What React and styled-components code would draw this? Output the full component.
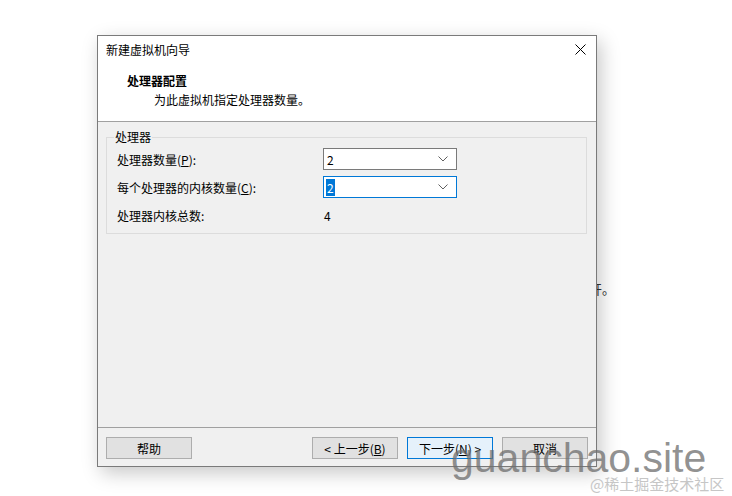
import styled, { createGlobalStyle } from "styled-components";

const GlobalStyle = createGlobalStyle`
  html, body {
    margin: 0;
    background: #ffffff;
  }
  body {
    font-family: "Noto Sans CJK SC", "Microsoft YaHei", sans-serif;
    font-size: 12px;
    color: #000;
  }
`;

const Page = styled.div`
  position: relative;
  width: 732px;
  height: 496px;
  padding: 35px 0 0 97px;
  box-sizing: border-box;
  overflow: hidden;
`;

const BehindText = styled.span`
  position: absolute;
  left: 589px;
  top: 279px;
  font-size: 13px;
  color: #333;
`;

const Window = styled.div`
  position: relative;
  z-index: 1;
  width: 500px;
  height: 432px;
  box-sizing: border-box;
  border: 1px solid #7a7a7a;
  background: #f0f0f0;
  display: flex;
  flex-direction: column;
  box-shadow: 4px 6px 18px rgba(0, 0, 0, 0.22);
`;

const TitleBar = styled.div`
  height: 27px;
  display: flex;
  align-items: center;
  justify-content: space-between;
  padding: 0 6px 0 8px;
  background: #fff;
`;

const Close = styled.div`
  width: 20px;
  height: 20px;
  display: flex;
  align-items: center;
  justify-content: center;
`;

const Header = styled.div`
  background: #fff;
  padding: 9px 0 13px 29px;
  border-bottom: 1px solid #a0a0a0;
  line-height: 17px;
`;

const Heading = styled.div`
  font-weight: 700;
  margin-bottom: 2px;
`;

const Subtitle = styled.div`
  padding-left: 27px;
`;

const Body = styled.div`
  flex: 1;
  padding: 7px 9px 0 8px;
`;

const Group = styled.fieldset`
  margin: 0;
  padding: 3px 0 7px 10px;
  border: 1px solid #dcdcdc;
  display: grid;
  grid-template-columns: 206px 134px;
  grid-auto-rows: 22px;
  row-gap: 6px;
  align-items: center;
`;

const Legend = styled.legend`
  padding: 0 1px;
  margin-left: -3px;
  line-height: 16px;
`;

const Label = styled.span`
  line-height: 17px;
`;

const Combo = styled.div`
  height: 22px;
  box-sizing: border-box;
  border: 1px solid ${(p) => (p.$focused ? "#0078d7" : "#7a7a7a")};
  background: #fff;
  display: flex;
  align-items: center;
  justify-content: space-between;
  padding: 0 8px 0 2px;
`;

const Value = styled.span`
  line-height: 17px;
  padding: 0 1px;
  background: ${(p) => (p.$selected ? "#0078d7" : "transparent")};
  color: ${(p) => (p.$selected ? "#fff" : "#000")};
`;

const Plain = styled.span`
  padding-left: 1px;
`;

const Footer = styled.div`
  border-top: 1px solid #a0a0a0;
  padding: 9px 8px 7px 8px;
  display: flex;
  gap: 9px;
`;

const Button = styled.button`
  width: 86px;
  height: 22px;
  box-sizing: border-box;
  margin: 0;
  padding: 0;
  font: inherit;
  color: #000;
  border: 1px solid ${(p) => (p.$primary ? "#0078d7" : "#adadad")};
  background: ${(p) => (p.$primary ? "#e5f1fb" : "#e1e1e1")};
  margin-left: ${(p) => (p.$pushRight ? "auto" : "0")};
`;

const Watermark = styled.div`
  position: absolute;
  z-index: 2;
  left: 451px;
  top: 434px;
  font-family: "Liberation Sans", Arial, sans-serif;
  font-size: 41px;
  line-height: 48px;
  color: rgba(110, 110, 110, 0.75);
`;

const SiteTag = styled.div`
  position: absolute;
  z-index: 2;
  left: 590px;
  top: 475px;
  font-family: "Noto Sans CJK SC", sans-serif;
  font-size: 15px;
  line-height: 18px;
  color: #c6c6c6;
`;

const Chevron = () => (
  <svg width="10" height="6" viewBox="0 0 10 6">
    <path d="M0.5 0.5 L5 5 L9.5 0.5" fill="none" stroke="#606060" strokeWidth="1" />
  </svg>
);

const CloseIcon = () => (
  <svg width="11" height="11" viewBox="0 0 11 11">
    <path d="M0.5 0.5 L10.5 10.5 M10.5 0.5 L0.5 10.5" stroke="#000" strokeWidth="1" />
  </svg>
);

const u = (s) => <span style={{ textDecoration: "underline" }}>{s}</span>;

export default function App() {
  return (
    <>
      <GlobalStyle />
      <Page>
        <BehindText>开。</BehindText>
        <Window>
          <TitleBar>
            <span>新建虚拟机向导</span>
            <Close>
              <CloseIcon />
            </Close>
          </TitleBar>
          <Header>
            <Heading>处理器配置</Heading>
            <Subtitle>为此虚拟机指定处理器数量。</Subtitle>
          </Header>
          <Body>
            <Group>
              <Legend>处理器</Legend>
              <Label>处理器数量({u("P")}):</Label>
              <Combo>
                <Value>2</Value>
                <Chevron />
              </Combo>
              <Label>每个处理器的内核数量({u("C")}):</Label>
              <Combo $focused>
                <Value $selected>2</Value>
                <Chevron />
              </Combo>
              <Label>处理器内核总数:</Label>
              <Plain>4</Plain>
            </Group>
          </Body>
          <Footer>
            <Button>帮助</Button>
            <Button $pushRight>&lt; 上一步({u("B")})</Button>
            <Button $primary>下一步({u("N")}) &gt;</Button>
            <Button>取消</Button>
          </Footer>
        </Window>
        <Watermark>guanchao.site</Watermark>
        <SiteTag>@稀土掘金技术社区</SiteTag>
      </Page>
    </>
  );
}
